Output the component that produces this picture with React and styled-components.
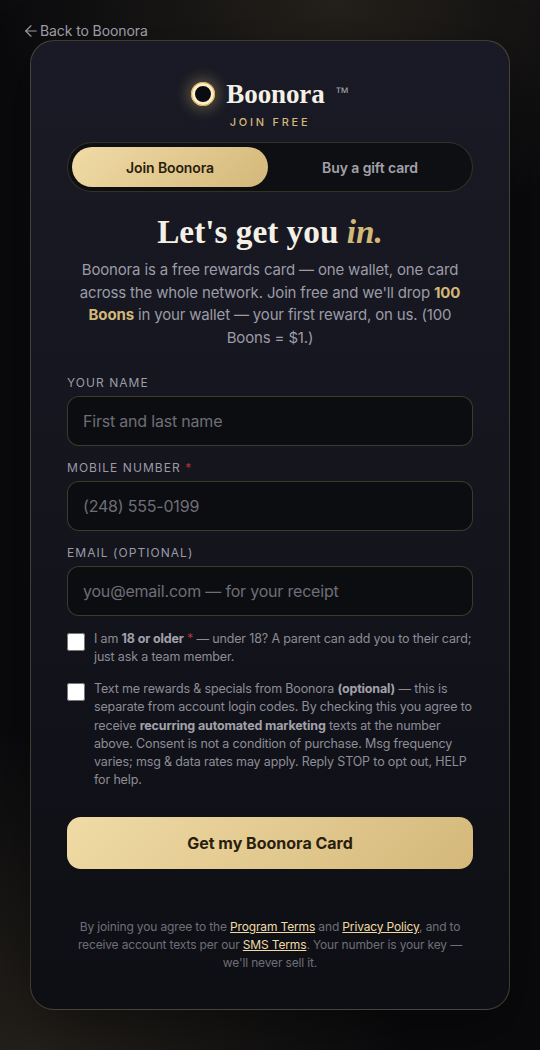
import React from 'react';
import styled, { createGlobalStyle } from 'styled-components';
import { ArrowLeft } from 'lucide-react';

const sans = `Inter, "Liberation Sans", sans-serif`;
const serif = `"Liberation Serif", "DejaVu Serif", serif`;

const GlobalStyle = createGlobalStyle`
  html, body { margin: 0; padding: 0; background: #0a0a0d; }
  * { box-sizing: border-box; }
`;

const Page = styled.div`
  width: 540px;
  height: 1050px;
  overflow: hidden;
  padding: 21px 30px 0;
  font-family: ${sans};
  background:
    radial-gradient(ellipse 340px 240px at 62% 0%, rgba(212, 184, 122, 0.13), transparent 100%),
    radial-gradient(ellipse 380px 320px at 6% 100%, rgba(212, 184, 122, 0.13), transparent 100%),
    #0a0a0d;
`;

const BackLink = styled.a`
  display: flex;
  align-items: center;
  height: 19px;
  margin-left: -8px;
  font-size: 14px;
  letter-spacing: -0.1px;
  color: #9c9ba6;
`;

const Card = styled.main`
  height: 970px;
  padding: 36px 36px 0;
  border: 1px solid rgba(212, 184, 122, 0.26);
  border-radius: 24px;
  background: linear-gradient(180deg, #191a25 0%, #0e0f14 100%);
  box-shadow: 0 20px 60px rgba(0, 0, 0, 0.4);
`;

const Brand = styled.div`
  display: flex;
  align-items: center;
  justify-content: center;
  height: 34px;
`;

const Eclipse = styled.span`
  width: 24px;
  height: 24px;
  border-radius: 50%;
  background: #0b0c12;
  border: 4px solid #fbeecb;
  outline: 1px solid #e0a63f;
  outline-offset: -1px;
  box-shadow: 0 0 14px 4px rgba(240, 205, 130, 0.3);
`;

const Wordmark = styled.span`
  margin-left: 11px;
  font-family: ${serif};
  font-size: 27px;
  font-weight: 700;
  letter-spacing: -0.1px;
  color: #f4f0e6;
`;

const Tm = styled.span`
  margin-left: 10px;
  align-self: flex-start;
  margin-top: 7px;
  font-family: "Liberation Sans", sans-serif;
  font-size: 14px;
  color: #a2a1ab;
`;

const Eyebrow = styled.div`
  margin-top: 4px;
  text-align: center;
  font-size: 11px;
  font-weight: 500;
  line-height: 14px;
  letter-spacing: 2.75px;
  color: #d4b87a;
`;

const Tabs = styled.div`
  display: flex;
  gap: 4px;
  height: 50px;
  margin-top: 13px;
  padding: 4px;
  border: 1px solid rgba(212, 184, 122, 0.2);
  border-radius: 25px;
  background: #0e0f13;
`;

const Tab = styled.button`
  flex: 1;
  border: 0;
  border-radius: 20px;
  font-family: ${sans};
  font-size: 14px;
  font-weight: 600;
  letter-spacing: -0.1px;
  color: ${p => (p.$active ? '#2a1e0c' : '#a2a1ab')};
  background: ${p => (p.$active ? 'linear-gradient(135deg, #f0dba6, #d4b87a)' : 'transparent')};
`;

const Title = styled.h1`
  margin: 20px 0 0;
  text-align: center;
  font-family: ${serif};
  font-size: 33.3px;
  font-weight: 700;
  line-height: 40px;
  color: #f4f0e6;

  em { color: #d4b87a; }
`;

const Intro = styled.p`
  margin: 7px 0 0;
  padding: 0 8px;
  text-align: center;
  font-size: 15px;
  line-height: 22.5px;
  letter-spacing: -0.16px;
  color: #9c9ba6;

  strong { font-weight: 700; color: #d4b87a; }
`;

const Field = styled.label`
  display: block;
  margin-top: ${p => (p.$first ? '26px' : '14px')};
`;

const FieldLabel = styled.span`
  display: block;
  margin-bottom: 5px;
  font-size: 12px;
  line-height: 16px;
  letter-spacing: 1.05px;
  color: #9c9ba6;

  i { font-style: normal; color: #b3322c; }
`;

const Input = styled.input`
  display: block;
  width: 100%;
  height: 50px;
  padding: 0 15px;
  border: 1px solid rgba(212, 184, 122, 0.26);
  border-radius: 12px;
  outline: 0;
  background: #0c0d10;
  font-family: ${sans};
  font-size: 16px;
  letter-spacing: -0.2px;
  color: #f4f0e6;

  &::placeholder { color: #6f6e78; opacity: 1; }
`;

const Consent = styled.label`
  display: flex;
  gap: 9px;
  margin-top: 14px;
  font-size: 12.5px;
  line-height: 18.125px;
  letter-spacing: -0.15px;
  color: #8d8c97;

  strong { font-weight: 700; color: #a2a1ab; }
  i { font-style: normal; color: #b3322c; }
`;

const Check = styled.input`
  flex: none;
  width: 18px;
  height: 18px;
  margin: 3px 0 0;
`;

const Submit = styled.button`
  display: block;
  width: 100%;
  height: 52px;
  margin-top: 28px;
  border: 0;
  border-radius: 14px;
  background: linear-gradient(135deg, #f0dba6, #d4b87a);
  font-family: ${sans};
  font-size: 16px;
  font-weight: 700;
  letter-spacing: 0;
  color: #2a1e0c;
`;

const Fine = styled.p`
  margin: 49px 0 0;
  text-align: center;
  font-size: 12px;
  line-height: 18px;
  letter-spacing: -0.15px;
  color: #6f6e78;

  a { color: #f0dba6; text-decoration: underline; }
`;

export default function App() {
  return (
    <Page>
      <GlobalStyle />
      <BackLink>
        <ArrowLeft size={18} strokeWidth={1.5} />
        Back to Boonora
      </BackLink>
      <Card>
        <Brand>
          <Eclipse />
          <Wordmark>Boonora</Wordmark>
          <Tm>™</Tm>
        </Brand>
        <Eyebrow>JOIN FREE</Eyebrow>
        <Tabs>
          <Tab $active>Join Boonora</Tab>
          <Tab>Buy a gift card</Tab>
        </Tabs>
        <Title>
          Let's get you <em>in.</em>
        </Title>
        <Intro>
          Boonora is a free rewards card — one wallet, one card across the whole network. Join free and
          we'll drop <strong>100 Boons</strong> in your wallet — your first reward, on us. (100 Boons = $1.)
        </Intro>
        <Field $first>
          <FieldLabel>YOUR NAME</FieldLabel>
          <Input placeholder="First and last name" />
        </Field>
        <Field>
          <FieldLabel>
            MOBILE NUMBER <i>*</i>
          </FieldLabel>
          <Input placeholder="(248) 555-0199" />
        </Field>
        <Field>
          <FieldLabel>EMAIL (OPTIONAL)</FieldLabel>
          <Input placeholder="you@email.com — for your receipt" />
        </Field>
        <Consent>
          <Check type="checkbox" />
          <span>
            I am <strong>18 or older</strong> <i>*</i> — under 18? A parent can add you to their card; just ask
            a team member.
          </span>
        </Consent>
        <Consent>
          <Check type="checkbox" />
          <span>
            Text me rewards &amp; specials from Boonora <strong>(optional)</strong> — this is separate from
            account login codes. By checking this you agree to receive{' '}
            <strong>recurring automated marketing</strong> texts at the number above. Consent is not a condition
            of purchase. Msg frequency varies; msg &amp; data rates may apply. Reply STOP to opt out, HELP for
            help.
          </span>
        </Consent>
        <Submit>Get my Boonora Card</Submit>
        <Fine>
          By joining you agree to the <a>Program Terms</a> and <a>Privacy Policy</a>, and to receive account
          texts per our <a>SMS Terms</a>. Your number is your key — we'll never sell it.
        </Fine>
      </Card>
    </Page>
  );
}
